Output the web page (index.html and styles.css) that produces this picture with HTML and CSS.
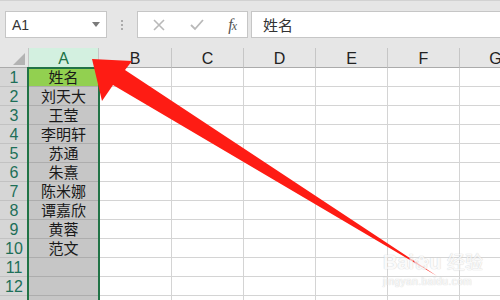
FILE: index.html
```html
<!DOCTYPE html>
<html lang="zh">
<head>
<meta charset="utf-8">
<title>Excel</title>
<link rel="stylesheet" href="styles.css">
</head>
<body>
<div class="app">
  <div class="toolbar">
    <div class="namebox"><span class="ref">A1</span><span class="drop"></span></div>
    <div class="dots"><i></i><i></i><i></i></div>
    <div class="fbtns">
      <svg class="ico" width="12" height="12" viewBox="0 0 12 12"><path d="M1 1L11 11M11 1L1 11" stroke="#b9b9b9" stroke-width="1.6" fill="none"/></svg>
      <svg class="ico" width="14" height="12" viewBox="0 0 14 12"><path d="M1 6L5 10L13 1" stroke="#b9b9b9" stroke-width="1.8" fill="none"/></svg>
      <span class="fx">f<span class="fxx">x</span></span>
    </div>
    <div class="formula">姓名</div>
  </div>
  <div class="sheet">
    <div class="hdr corner"><span class="tri"></span></div>
    <div class="hdr col sel">A</div>
    <div class="hdr col wide">B</div>
    <div class="hdr col">C</div>
    <div class="hdr col">D</div>
    <div class="hdr col">E</div>
    <div class="hdr col">F</div>
    <div class="hdr col">G</div>

    <div class="rh">1</div><div class="c a1">姓名</div><div class="c"></div><div class="c"></div><div class="c"></div><div class="c"></div><div class="c"></div><div class="c"></div>
    <div class="rh">2</div><div class="c a">刘天大</div><div class="c"></div><div class="c"></div><div class="c"></div><div class="c"></div><div class="c"></div><div class="c"></div>
    <div class="rh">3</div><div class="c a">王莹</div><div class="c"></div><div class="c"></div><div class="c"></div><div class="c"></div><div class="c"></div><div class="c"></div>
    <div class="rh">4</div><div class="c a">李明轩</div><div class="c"></div><div class="c"></div><div class="c"></div><div class="c"></div><div class="c"></div><div class="c"></div>
    <div class="rh">5</div><div class="c a">苏通</div><div class="c"></div><div class="c"></div><div class="c"></div><div class="c"></div><div class="c"></div><div class="c"></div>
    <div class="rh">6</div><div class="c a">朱熹</div><div class="c"></div><div class="c"></div><div class="c"></div><div class="c"></div><div class="c"></div><div class="c"></div>
    <div class="rh">7</div><div class="c a">陈米娜</div><div class="c"></div><div class="c"></div><div class="c"></div><div class="c"></div><div class="c"></div><div class="c"></div>
    <div class="rh">8</div><div class="c a">谭嘉欣</div><div class="c"></div><div class="c"></div><div class="c"></div><div class="c"></div><div class="c"></div><div class="c"></div>
    <div class="rh">9</div><div class="c a">黄蓉</div><div class="c"></div><div class="c"></div><div class="c"></div><div class="c"></div><div class="c"></div><div class="c"></div>
    <div class="rh">10</div><div class="c a">范文</div><div class="c"></div><div class="c"></div><div class="c"></div><div class="c"></div><div class="c"></div><div class="c"></div>
    <div class="rh">11</div><div class="c a"></div><div class="c"></div><div class="c"></div><div class="c"></div><div class="c"></div><div class="c"></div><div class="c"></div>
    <div class="rh">12</div><div class="c a"></div><div class="c"></div><div class="c"></div><div class="c"></div><div class="c"></div><div class="c"></div><div class="c"></div>
    <div class="rh"></div><div class="c a"></div><div class="c"></div><div class="c"></div><div class="c"></div><div class="c"></div><div class="c"></div><div class="c"></div>
  </div>
  <div class="selbox"></div>
  <svg class="arrow" width="500" height="300" viewBox="0 0 500 300">
    <polygon points="92,59 132,61 125,70 437,276 113,85 102,101" fill="#fe1c14"/>
  </svg>
  <div class="watermark">
    <div class="wm1">Bai<span class="paw">❀</span>u <span class="jy">经验</span></div>
    <div class="wm2">jingyan.baidu.com</div>
  </div>
</div>
</body>
</html>
```
FILE: styles.css
```css
html, body {
  margin: 0;
  padding: 0;
  width: 500px;
  height: 300px;
  overflow: hidden;
  background: #ffffff;
}
.app {
  position: relative;
  width: 500px;
  height: 300px;
  overflow: hidden;
  font-family: "Liberation Sans", "Noto Sans CJK SC", sans-serif;
}
.toolbar {
  height: 48px;
  box-sizing: border-box;
  background: #e6e6e6;
  border-top: 1px solid #d2d2d2;
  display: flex;
  align-items: flex-start;
  padding-top: 10px;
  padding-left: 5px;
}
.namebox {
  width: 102px;
  height: 27px;
  box-sizing: border-box;
  background: #fff;
  border: 1px solid #c6c6c6;
  display: flex;
  align-items: center;
  padding-left: 6px;
  padding-right: 6px;
}
.ref {
  flex: 1;
  font-size: 14px;
  color: #333;
}
.drop {
  width: 0;
  height: 0;
  border-left: 4px solid transparent;
  border-right: 4px solid transparent;
  border-top: 5px solid #7a7a7a;
}
.dots {
  width: 30px;
  height: 27px;
  display: flex;
  flex-direction: column;
  align-items: center;
  justify-content: center;
  gap: 2px;
}
.dots i {
  display: block;
  width: 2px;
  height: 2px;
  background: #ababab;
}
.fbtns {
  width: 111px;
  height: 27px;
  box-sizing: border-box;
  background: #fff;
  border: 1px solid #c6c6c6;
  display: flex;
  align-items: center;
  justify-content: space-between;
  padding-left: 15px;
  padding-right: 11px;
}
.fx {
  font-family: "Liberation Serif", serif;
  font-style: italic;
  font-size: 16px;
  color: #555;
  letter-spacing: -1px;
}
.fxx {
  font-size: 12px;
}
.formula {
  margin-left: 3px;
  flex: 1;
  height: 27px;
  box-sizing: border-box;
  background: #fff;
  border: 1px solid #c6c6c6;
  border-right: none;
  padding-left: 11px;
  font-family: "Noto Sans CJK SC", sans-serif;
  font-size: 15px;
  line-height: 25px;
  color: #333;
}
.sheet {
  display: grid;
  grid-template-columns: 29px 70px 73px 72px 72px 72px 72px 72px;
  grid-template-rows: 20px repeat(13, 19px);
}
.hdr {
  box-sizing: border-box;
  background: #e6e6e6;
  border-bottom: 1px solid #ababab;
  border-right: 1px solid #c6c6c6;
  font-size: 16px;
  color: #222;
  text-align: center;
  line-height: 21px;
  white-space: nowrap;
}
.corner {
  position: relative;
}
.tri {
  position: absolute;
  right: 3px;
  bottom: 2px;
  width: 0;
  height: 0;
  border-left: 12px solid transparent;
  border-bottom: 12px solid #b3b3b3;
}
.hdr.sel {
  background: #d3f0e0;
  color: #217346;
}
.rh {
  box-sizing: border-box;
  background: #d6d6d6;
  border-bottom: 1px solid #c2c2c2;
  border-right: 1px solid #ababab;
  font-size: 16px;
  color: #1d6f58;
  text-align: center;
  line-height: 19px;
}
.c {
  box-sizing: border-box;
  border-bottom: 1px solid #d4d4d4;
  border-right: 1px solid #d4d4d4;
  font-family: "Noto Sans CJK SC", sans-serif;
  font-size: 15px;
  color: #1a1a1a;
  text-align: center;
  line-height: 18px;
  white-space: nowrap;
}
.c.a {
  background: #c6c6c6;
  border-bottom-color: #adadad;
}
.c.a1 {
  background: #92d050;
  border-bottom-color: #adadad;
}
.selbox {
  position: absolute;
  left: 27px;
  top: 67px;
  width: 73px;
  height: 240px;
  box-sizing: border-box;
  border: 2px solid #217346;
}
.arrow {
  position: absolute;
  left: 0;
  top: 0;
}
.watermark {
  position: absolute;
  left: 383px;
  top: 248px;
  color: rgba(255,255,255,0.9);
  text-shadow: 0 0 1px #c8c8c8, 0 0 1px #c8c8c8;
  font-family: "Liberation Sans", sans-serif;
  opacity: 0.7;
}
.wm1 {
  font-size: 20px;
  font-weight: bold;
  line-height: 26px;
}
.paw {
  font-size: 18px;
}
.jy {
  font-family: "Noto Sans CJK SC", sans-serif;
  font-weight: normal;
  font-size: 18px;
}
.wm2 {
  font-size: 10px;
  line-height: 12px;
  letter-spacing: 0.5px;
}
```
